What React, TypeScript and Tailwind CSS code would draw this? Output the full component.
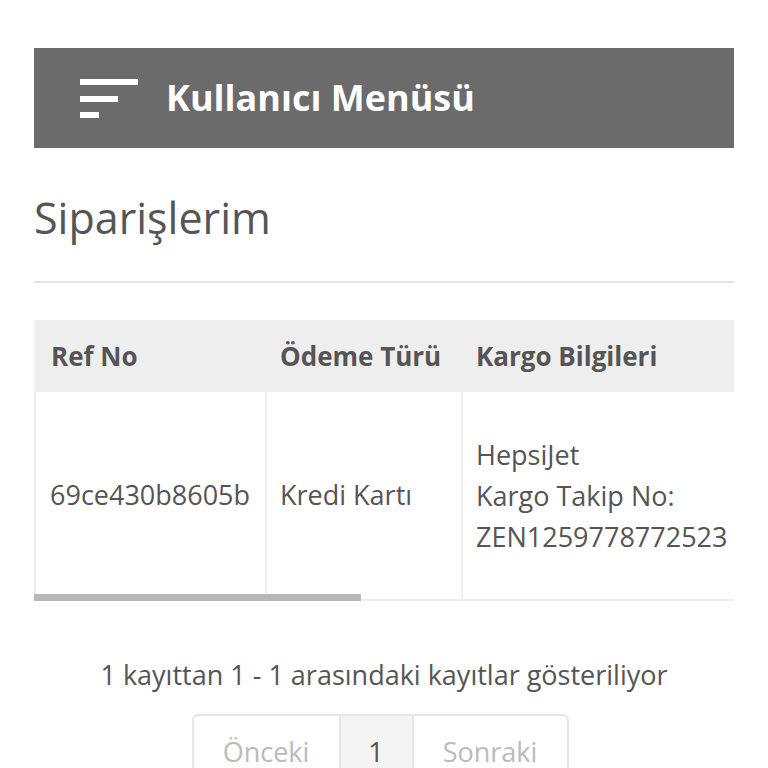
import React from "react";

export default function App() {
  return (
    <div
      className="min-h-screen bg-white text-[#555555]"
      style={{ fontFamily: '"Open Sans", "Noto Sans", sans-serif' }}
    >
      <div className="px-[34px] pt-[48px] overflow-hidden">
        <div className="h-[100px] bg-[#6b6b6b] flex items-center pl-[46px]">
          <svg width="58" height="39" viewBox="0 0 58 39" className="shrink-0">
            <rect x="0" y="0" width="58" height="6" fill="#ffffff" />
            <rect x="0" y="17" width="38" height="6" fill="#ffffff" />
            <rect x="0" y="33" width="19" height="6" fill="#ffffff" />
          </svg>
          <div className="ml-[28px] text-white font-bold text-[36px] leading-none">
            Kullanıcı Menüsü
          </div>
        </div>

        <h1 className="mt-[45px] text-[43px] leading-[50px] font-normal text-[#555555]">
          Siparişlerim
        </h1>

        <div className="mt-[38px] h-[2px] bg-[#e3e3e3]" />

        <div className="relative mt-[37px] overflow-hidden">
          <table className="border-collapse w-[1500px] table-fixed text-[26px]">
            <colgroup>
              <col className="w-[231px]" />
              <col className="w-[196px]" />
              <col />
            </colgroup>
            <thead>
              <tr className="bg-[#eeeeee] h-[72px]">
                <th className="text-left font-bold px-[16px] align-middle whitespace-nowrap">Ref No</th>
                <th className="text-left font-bold px-[14px] align-middle whitespace-nowrap">Ödeme Türü</th>
                <th className="text-left font-bold px-[14px] align-middle whitespace-nowrap">Kargo Bilgileri</th>
              </tr>
            </thead>
            <tbody className="text-[27px]">
              <tr className="h-[208px] border-b-2 border-[#eeeeee]">
                <td className="border-l-2 border-r-2 border-[#eeeeee] px-[14px] align-middle whitespace-nowrap">
                  69ce430b8605b
                </td>
                <td className="border-r-2 border-[#eeeeee] px-[13px] align-middle whitespace-nowrap">
                  Kredi Kartı
                </td>
                <td className="px-[13px] align-middle leading-[41px] whitespace-nowrap">
                  HepsiJet
                  <br />
                  Kargo Takip No:
                  <br />
                  ZEN1259778772523
                </td>
              </tr>
            </tbody>
          </table>
          <div className="absolute left-0 bottom-0 w-[327px] h-[7px] bg-[#b8b8b8]" />
        </div>

        <p className="mt-[54px] text-center text-[27px] leading-[40px] text-[#555555]">
          1 kayıttan 1 - 1 arasındaki kayıtlar gösteriliyor
        </p>

        <div className="mt-[19px] flex justify-center pr-[8px]">
          <div className="flex border-2 border-[#e6e6e6] rounded-[6px] overflow-hidden text-[27px]">
            <div className="h-[72px] w-[145px] flex items-center justify-center text-[#bbbbbb]">Önceki</div>
            <div className="h-[72px] w-[75px] flex items-center justify-center bg-[#f4f4f4] border-l-2 border-r-2 border-[#e6e6e6] text-[#555555]">
              1
            </div>
            <div className="h-[72px] w-[153px] flex items-center justify-center text-[#bbbbbb]">Sonraki</div>
          </div>
        </div>
      </div>
    </div>
  );
}
